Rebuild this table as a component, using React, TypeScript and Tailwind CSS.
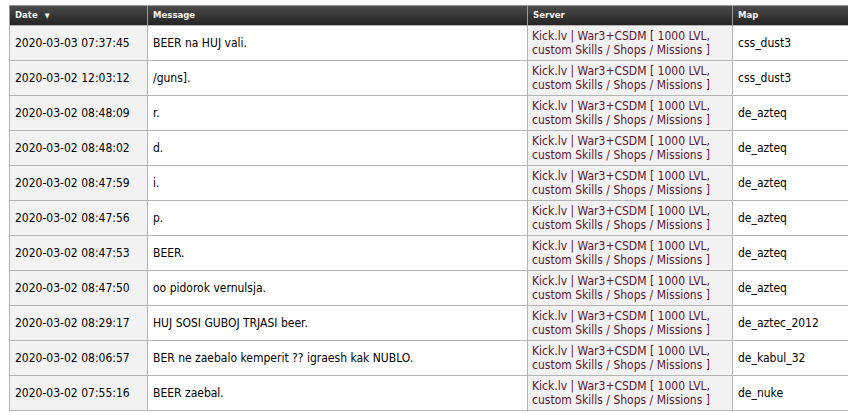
import React from "react";

const rows: [string, string, string][] = [
  ["2020-03-03 07:37:45", "BEER na HUJ vali.", "css_dust3"],
  ["2020-03-02 12:03:12", "/guns].", "css_dust3"],
  ["2020-03-02 08:48:09", "r.", "de_azteq"],
  ["2020-03-02 08:48:02", "d.", "de_azteq"],
  ["2020-03-02 08:47:59", "i.", "de_azteq"],
  ["2020-03-02 08:47:56", "p.", "de_azteq"],
  ["2020-03-02 08:47:53", "BEER.", "de_azteq"],
  ["2020-03-02 08:47:50", "oo pidorok vernulsja.", "de_azteq"],
  ["2020-03-02 08:29:17", "HUJ SOSI GUBOJ TRJASI beer.", "de_aztec_2012"],
  ["2020-03-02 08:06:57", "BER ne zaebalo kemperit ?? igraesh kak NUBLO.", "de_kabul_32"],
  ["2020-03-02 07:55:16", "BEER zaebal.", "de_nuke"],
];

export default function App() {
  return (
    <div
      className="w-[848px] h-[413px] overflow-hidden bg-white pt-[5px] pl-[9px]"
      style={{ fontFamily: "'DejaVu Sans Condensed', 'DejaVu Sans', sans-serif" }}
    >
      <table className="border-collapse table-fixed w-[850px] text-[12px] text-[#000]">
        <colgroup>
          <col className="w-[138px]" />
          <col className="w-[380px]" />
          <col className="w-[205px]" />
          <col />
        </colgroup>
        <thead>
          <tr className="h-[20px] bg-gradient-to-b from-[#4a4a4a] to-[#232323] text-[#f4f4f4]">
            <th className="border border-[#9a9a9a] border-b-0 px-[5px] text-left font-bold text-[9.5px]">
              Date <span className="ml-[4px] text-[7px] align-middle">▼</span>
            </th>
            <th className="border border-[#9a9a9a] border-b-0 px-[5px] text-left font-bold text-[9.5px]">Message</th>
            <th className="border border-[#9a9a9a] border-b-0 px-[5px] text-left font-bold text-[9.5px]">Server</th>
            <th className="border border-[#9a9a9a] border-b-0 border-r-0 px-[5px] text-left font-bold text-[9.5px]">Map</th>
          </tr>
        </thead>
        <tbody>
          {rows.map(([d, m, map], i) => (
            <tr key={i} className="h-[35px]">
              <td className="border border-[#b4b4b4] bg-[#f2f2f2] px-[5px] whitespace-nowrap">{d}</td>
              <td className="border border-[#b4b4b4] bg-white px-[5px]">{m}</td>
              <td className="border border-[#b4b4b4] bg-[#f2f2f2] px-[4px] leading-[14px] text-[#5a1634] whitespace-nowrap">
                Kick.lv | War3+CSDM [ 1000 LVL,
                <br />
                custom Skills / Shops / Missions ]
              </td>
              <td className="border border-[#b4b4b4] border-r-0 bg-white px-[5px]">{map}</td>
            </tr>
          ))}
        </tbody>
      </table>
    </div>
  );
}
